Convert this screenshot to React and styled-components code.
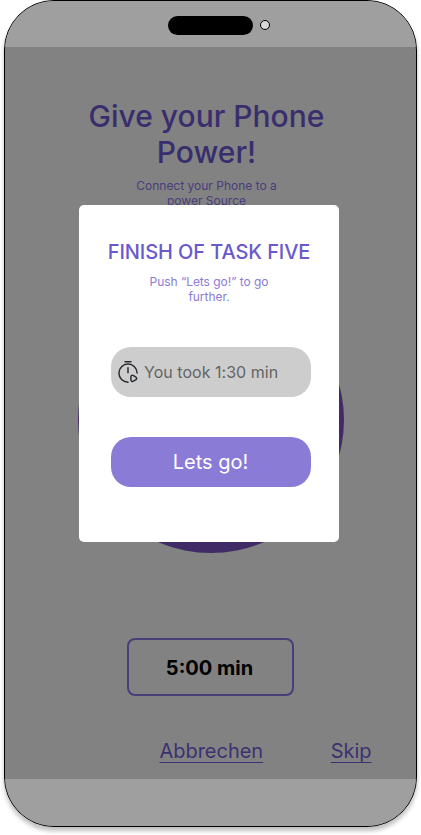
import React from 'react';
import styled, { createGlobalStyle } from 'styled-components';

const GlobalStyle = createGlobalStyle`
  *, *::before, *::after { box-sizing: border-box; }
  body { margin: 0; background: #fff; font-family: Inter, sans-serif; }
  h1, h2, p { margin: 0; }
  button { font-family: inherit; padding: 0; cursor: pointer; }
`;

const Stage = styled.main`
  height: 835px;
  padding-left: 4px;
  overflow: hidden;
`;

const Phone = styled.div`
  position: relative;
  display: flex;
  flex-direction: column;
  width: 413px;
  height: 827px;
  border: 1px solid #000;
  border-radius: 50px;
  overflow: hidden;
  background: #828282;
  box-shadow: 0 4px 4px rgba(0, 0, 0, 0.25);
`;

const Bezel = styled.div`
  display: flex;
  flex: none;
  height: ${(p) => p.$height}px;
  padding: 15px 0 0 163px;
  gap: 7px;
  background: #9f9f9f;
`;

const Speaker = styled.div`
  width: 85px;
  height: 19px;
  border-radius: 10px;
  background: #000;
`;

const Camera = styled.div`
  width: 10px;
  height: 10px;
  margin-top: 4px;
  border: 1px solid #000;
  border-radius: 50%;
  background: #d9d9d9;
`;

const Screen = styled.div`
  display: flex;
  flex: 1;
  flex-direction: column;
`;

const Title = styled.h1`
  width: 260px;
  margin: 51px 0 0 71.5px;
  font-size: 30px;
  font-weight: 500;
  line-height: 36px;
  text-align: center;
  color: #392e6d;
`;

const Subtitle = styled.p`
  width: 160px;
  margin: 8px 0 0 121.5px;
  font-size: 12px;
  font-weight: 400;
  line-height: 15px;
  text-align: center;
  color: #483e7b;
`;

const Dial = styled.div`
  width: 266px;
  height: 266px;
  margin: 79px 0 0 73px;
  border-radius: 50%;
  background: #412b66;
`;

const TimeBox = styled.div`
  display: flex;
  align-items: center;
  justify-content: center;
  width: 167px;
  height: 58px;
  margin: 85px 0 0 122px;
  padding: 2px 2px 0 0;
  border: 2px solid #483e7b;
  border-radius: 8px;
  font-size: 20px;
  font-weight: 700;
  color: #000;
`;

const Links = styled.nav`
  display: flex;
  justify-content: space-between;
  margin: 43px 44.5px 0 154.5px;
`;

const TextLink = styled.a`
  font-size: 20px;
  font-weight: 400;
  letter-spacing: -0.03px;
  line-height: 24px;
  color: #3c3170;
  text-decoration: underline;
  text-decoration-thickness: 1.3px;
  text-underline-offset: 4px;
  cursor: pointer;
`;

const Dialog = styled.section`
  position: absolute;
  top: 204px;
  left: 74px;
  display: flex;
  flex-direction: column;
  width: 260px;
  height: 337px;
  padding-top: 35px;
  border-radius: 5px;
  background: #fff;
`;

const DialogTitle = styled.h2`
  font-size: 20px;
  font-weight: 500;
  letter-spacing: -0.09px;
  line-height: 24px;
  text-align: center;
  white-space: nowrap;
  color: #6a58cd;
`;

const DialogText = styled.p`
  width: 140px;
  margin: 10px 0 0 60px;
  font-size: 12px;
  font-weight: 400;
  letter-spacing: -0.04px;
  line-height: 15px;
  text-align: center;
  color: #8a7bd7;
`;

const Result = styled.div`
  display: flex;
  align-items: center;
  width: 200px;
  height: 50px;
  margin: 43px 0 0 32px;
  padding-left: 6px;
  gap: 5px;
  border-radius: 20px;
  background: #cdcdcd;
  font-size: 16px;
  font-weight: 400;
  letter-spacing: 0.03px;
  color: #646464;
`;

const GoButton = styled.button`
  width: 200px;
  height: 50px;
  margin: 40px 0 0 32px;
  padding-right: 1px;
  border: 0;
  border-radius: 20px;
  background: #8a7bd7;
  font-size: 20px;
  font-weight: 400;
  color: #fff;
`;

const TimerIcon = () => (
  <svg width="22" height="24" viewBox="0 0 22 24" fill="none" stroke="#292d32" strokeWidth="1.5" strokeLinecap="round" strokeLinejoin="round">
    <path d="M8 1.8h6M11 7.8v5M11 22.2a9.1 9.1 0 1 1 9.1-9.1" />
    <path d="M13.9 18.5v-1.4c0-1.7 1.2-2.3 2.6-1.5l2.1 1.3c1.4.8 1.4 2.2 0 3l-2.1 1.2c-1.4.8-2.6.2-2.6-1.5z" />
  </svg>
);

export default function App() {
  return (
    <>
      <GlobalStyle />
      <Stage>
        <Phone>
          <Bezel $height={46}>
            <Speaker />
            <Camera />
          </Bezel>
          <Screen>
            <Title>Give your Phone Power!</Title>
            <Subtitle>Connect your Phone to a power Source</Subtitle>
            <Dial />
            <TimeBox>5:00 min</TimeBox>
            <Links>
              <TextLink>Abbrechen</TextLink>
              <TextLink>Skip</TextLink>
            </Links>
          </Screen>
          <Bezel $height={47} />
          <Dialog role="dialog">
            <DialogTitle>FINISH OF TASK FIVE</DialogTitle>
            <DialogText>Push “Lets go!” to go further.</DialogText>
            <Result>
              <TimerIcon />
              You took 1:30 min
            </Result>
            <GoButton>Lets go!</GoButton>
          </Dialog>
        </Phone>
      </Stage>
    </>
  );
}
